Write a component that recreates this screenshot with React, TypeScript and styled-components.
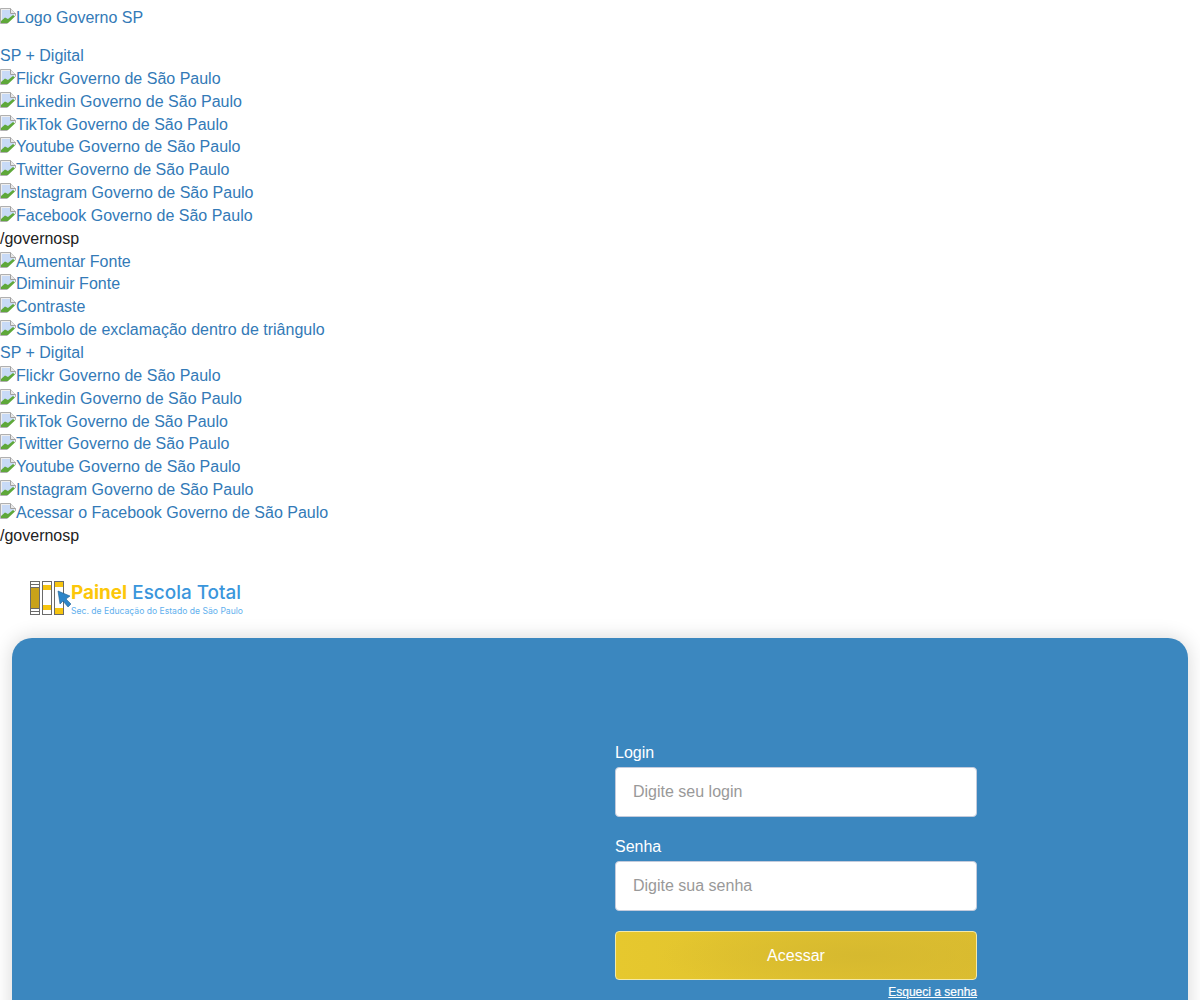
import styled, { createGlobalStyle } from "styled-components";

const GlobalStyle = createGlobalStyle`
  html, body {
    margin: 0;
    padding: 0;
    background: #fff;
    overflow: hidden;
  }
  body {
    font-family: "Liberation Sans", Arial, sans-serif;
    font-size: 16px;
    line-height: 1.42857;
    color: #222;
  }
  * {
    box-sizing: border-box;
  }
`;

const Page = styled.div`
  width: 1200px;
  height: 1000px;
  overflow: hidden;
`;

const GovBar = styled.header`
  display: flex;
  flex-direction: column;
`;

const LogoRow = styled.div`
  padding: 7px 0 14.2px;
`;

const Row = styled.div`
  height: 22.857px;
  white-space: nowrap;
`;

const Link = styled.a`
  color: #337ab7;
  text-decoration: none;
  display: inline-flex;
  align-items: flex-start;
`;

const BrokenIcon = styled.svg`
  width: 16px;
  height: 16px;
  flex: none;
  margin-top: 1px;
`;

const Brand = styled.div`
  display: flex;
  align-items: flex-start;
  margin: 21px 0 0 30px;
  height: 47px;
  padding-top: 12px;
`;

const BrandText = styled.div`
  display: flex;
  flex-direction: column;
  font-family: Inter, "Noto Sans", sans-serif;
  margin-left: -1px;
`;

const BrandTitle = styled.div`
  font-size: 18.9px;
  line-height: 24px;
  font-weight: 500;
  color: #3a96dc;
  white-space: nowrap;
`;

const BrandAccent = styled.span`
  color: #fcc70a;
  font-weight: 700;
`;

const BrandSub = styled.div`
  font-size: 8.6px;
  line-height: 11px;
  margin-top: 1px;
  color: #5fb0ee;
  white-space: nowrap;
`;

const Card = styled.main`
  margin: 22px 12px 0;
  height: 500px;
  padding: 103px 211px 0 0;
  background: #3b87bf;
  border-radius: 20px;
  box-shadow: 0 0 20px rgba(0, 0, 0, 0.16);
  display: flex;
  justify-content: flex-end;
`;

const Form = styled.form`
  width: 362px;
  display: flex;
  flex-direction: column;
`;

const Field = styled.div`
  display: flex;
  flex-direction: column;
  margin-bottom: 18px;
`;

const Label = styled.label`
  color: #fff;
  font-size: 16px;
  line-height: 23px;
  margin-bottom: 3px;
`;

const Input = styled.input`
  height: 50px;
  padding: 0 17px;
  border: 1px solid #c3cbdc;
  border-radius: 4px;
  background: #fff;
  font-family: inherit;
  font-size: 16px;
  color: #333;
  outline: none;

  &::placeholder {
    color: #999;
    opacity: 1;
  }
`;

const Submit = styled.button`
  height: 49px;
  margin-top: 2px;
  padding: 1px 0 0;
  border: 1px solid #f3e9a8;
  border-radius: 4px;
  background: radial-gradient(ellipse 200px 40px at 68% 50%, #d6b92f, transparent),
    linear-gradient(90deg, #e6c82e, #dcbd30);
  color: #fff;
  font-family: inherit;
  font-size: 16px;
`;

const Forgot = styled.a`
  align-self: flex-end;
  margin-top: 4px;
  color: #fff;
  font-size: 12px;
  line-height: 17px;
  text-decoration: underline;
  -webkit-text-stroke: 0.2px #fff;
`;

type Item = { alt: string; plain?: boolean; text?: boolean };

const top: Item[] = [
  { alt: "SP + Digital", text: true },
  { alt: "Flickr Governo de São Paulo" },
  { alt: "Linkedin Governo de São Paulo" },
  { alt: "TikTok Governo de São Paulo" },
  { alt: "Youtube Governo de São Paulo" },
  { alt: "Twitter Governo de São Paulo" },
  { alt: "Instagram Governo de São Paulo" },
  { alt: "Facebook Governo de São Paulo" },
  { alt: "/governosp", plain: true },
  { alt: "Aumentar Fonte" },
  { alt: "Diminuir Fonte" },
  { alt: "Contraste" },
  { alt: "Símbolo de exclamação dentro de triângulo" },
  { alt: "SP + Digital", text: true },
  { alt: "Flickr Governo de São Paulo" },
  { alt: "Linkedin Governo de São Paulo" },
  { alt: "TikTok Governo de São Paulo" },
  { alt: "Twitter Governo de São Paulo" },
  { alt: "Youtube Governo de São Paulo" },
  { alt: "Instagram Governo de São Paulo" },
  { alt: "Acessar o Facebook Governo de São Paulo" },
  { alt: "/governosp", plain: true },
];

// chrome's missing image glyph
function Broken() {
  return (
    <BrokenIcon viewBox="0 0 16 16">
      <path d="M.5.5h10l5 5v10H.5z" fill="#eee" stroke="#b0b0b0" />
      <path d="M2 2h8v4h4v5L2 13z" fill="#c8daf6" />
      <path d="M1 15v-2l4-3.500 3 1.500 5-4 2 1.500v6.500z" fill="#5fa83a" />
      <path d="M10.500.5v5h5" fill="#e8e8e8" stroke="#a0a0a0" />
      <path d="M16 7.500L7 16h9z" fill="#fff" />
    </BrokenIcon>
  );
}

function Books() {
  return (
    <svg width="42" height="35" viewBox="0 0 42 35">
      <g stroke="#6a6a6a" strokeWidth="1" fill="#fff">
        <rect x="0.500" y="0.500" width="9" height="33" />
        <rect x="12.500" y="0.500" width="9" height="33" />
        <rect x="24.500" y="0.500" width="9" height="33" />
      </g>
      <rect x="1" y="7" width="8" height="20" fill="#c9a21a" />
      <path d="M1 3.500h8M1 6.500h8M1 27.500h8M1 30.500h8" stroke="#6a6a6a" />
      <rect x="13" y="4" width="8" height="5" fill="#f6c40f" />
      <rect x="13" y="24" width="8" height="5" fill="#f6c40f" />
      <rect x="25" y="1" width="8" height="5" fill="#f6c40f" />
      <rect x="25" y="27" width="8" height="6" fill="#f6c40f" />
      <path d="M28 10l2 13 3-3 5 6 3-3-5-5 4-3z" fill="#2e86c9" stroke="#1f5f93" strokeWidth="0.6" />
    </svg>
  );
}

export default function App() {
  return (
    <Page>
      <GlobalStyle />
      <GovBar>
        <LogoRow>
          <Link href="#">
            <Broken />
            Logo Governo SP
          </Link>
        </LogoRow>
        {top.map((item, i) => (
          <Row key={i}>
            {item.plain ? (
              item.alt
            ) : (
              <Link href="#">
                {!item.text && <Broken />}
                {item.alt}
              </Link>
            )}
          </Row>
        ))}
      </GovBar>

      <Brand>
        <Books />
        <BrandText>
          <BrandTitle>
            <BrandAccent>Painel</BrandAccent> Escola Total
          </BrandTitle>
          <BrandSub>Sec. de Educação do Estado de São Paulo</BrandSub>
        </BrandText>
      </Brand>

      <Card>
        <Form>
          <Field>
            <Label htmlFor="login">Login</Label>
            <Input id="login" placeholder="Digite seu login" />
          </Field>
          <Field>
            <Label htmlFor="senha">Senha</Label>
            <Input id="senha" type="password" placeholder="Digite sua senha" />
          </Field>
          <Submit type="button">Acessar</Submit>
          <Forgot href="#">Esqueci a senha</Forgot>
        </Form>
      </Card>
    </Page>
  );
}
